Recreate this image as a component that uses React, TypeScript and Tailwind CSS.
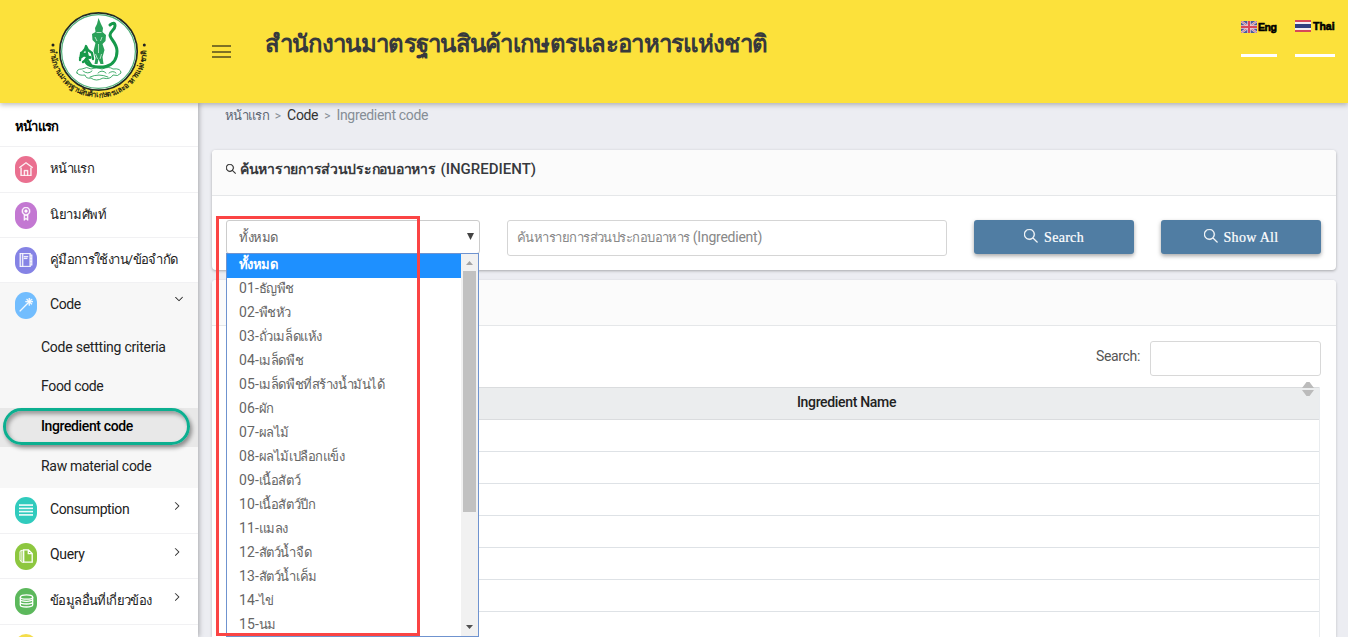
import React from "react";
import {
  TfiHome, TfiMedallAlt, TfiAgenda, TfiWand, TfiAlignJustify,
  TfiSearch, TfiAngleRight, TfiAngleDown,
} from "react-icons/tfi";

const options = [
  ["01-", "ธัญพืช"], ["02-", "พืชหัว"], ["03-", "ถั่วเมล็ดแห้ง"], ["04-", "เมล็ดพืช"],
  ["05-", "เมล็ดพืชที่สร้างน้ำมันได้"], ["06-", "ผัก"], ["07-", "ผลไม้"], ["08-", "ผลไม้เปลือกแข็ง"],
  ["09-", "เนื้อสัตว์"], ["10-", "เนื้อสัตว์ปีก"], ["11-", "แมลง"], ["12-", "สัตว์น้ำจืด"],
  ["13-", "สัตว์น้ำเค็ม"], ["14-", "ไข่"], ["15-", "นม"],
];

function Database() {
  return (
    <svg width="15" height="14" viewBox="0 0 15 14" fill="none" stroke="currentColor" strokeWidth="1.3">
      <ellipse cx="7.500" cy="3" rx="6.200" ry="2.200" />
      <path d="M1.300 3v2.200c0 1.200 2.700 2.100 6.200 2.100s6.200-.9 6.200-2.100V3M1.300 5.800v2.100c0 1.200 2.700 2.100 6.200 2.100s6.200-.9 6.200-2.100V5.800M1.300 8.600v2.300c0 1.200 2.700 2.100 6.200 2.100s6.200-.9 6.200-2.100V8.600" />
    </svg>
  );
}

function Pages() {
  return (
    <svg width="14" height="14" viewBox="0 0 14 14" fill="none" stroke="currentColor" strokeWidth="1.3">
      <path d="M4.700.8h4.800l3.700 3.700v8.700H4.700zM9.300.8v3.900h3.900" />
      <path d="M4.500 1.300H3Q1 1.300 1 3v8l1.700 2.200h2M2.900 2v10.500" strokeWidth="1" />
    </svg>
  );
}

function Logo() {
  return (
    <svg width="110" height="103" viewBox="43 0 110 103">
      <circle cx="98.5" cy="51.5" r="38.7" fill="#fff" stroke="#222c22" strokeWidth="1.7" />
      <circle cx="98.5" cy="51.5" r="36.9" fill="none" stroke="#4fae78" strokeWidth="1.2" />
      <g fill="none" stroke="#16994a" strokeLinecap="round" strokeLinejoin="round">
        <path d="M110 25q5-4 5 1c0 4-5 5-5 9s7 8 7 16-4 14-11 15.500-16 0-19-3 0-7 3-6" strokeWidth="3" />
        <path d="M80 60l1-6 4-5 1-3 2 4 4 3 1 6M81 53l5 1M80 58l4-3 4 2M83 62l4-3 4 6M86 49l2 8" strokeWidth="2.300" />
        <path d="M77 73q-1-4 5-4q5-3 9 0q6-3 11 0q7-3 11 0q8-1 8 4q-3 4-8 2q-3 5-10 3q-7 4-12 0q-5 1-6-3q-6 1-8-2zM83 71q5 4 9 0m6 2q4-4 8 0m3 0q4-3 7 0M90 77q9-4 18 0" strokeWidth=".8" />
      </g>
      <path d="M98.500 18l-1.500 6-2 4 .5 4-3.500 2 .5 6 3 3-2 8 2 7-1 6h3l1-5 2 5h3l-1-7 2-7-2-6 3-3 .5-6-3.500-3 .5-4-2-4z" fill="#2aa159" />
      <path d="M96.500 32.500h5M95 37l2 4m5-4l-1.500 4M98.500 44v9m-3 1l2 5m4-5l-1.500 5" stroke="#d5f0df" strokeWidth=".8" />
      <circle cx="53" cy="45" r="1.500" fill="#222" />
      <circle cx="144.300" cy="45" r="1.500" fill="#222" />
      <path id="seal" d="M50.500 49.500A48 48 0 0 0 146.500 49.500" fill="none" />
      <text fontSize="8" fontWeight="700" letterSpacing="0" fill="#2b2a12" className="font-['Noto_Sans',sans-serif]">
        <textPath href="#seal" textLength="149" lengthAdjust="spacingAndGlyphs">สำนักงานมาตรฐานสินค้าเกษตรและอาหารแห่งชาติ</textPath>
      </text>
    </svg>
  );
}

function Item({ icon, color, label, text, height, arrow }: {
  icon: React.ReactNode; color: string; label: string; text: string; height: string; arrow?: boolean;
}) {
  return (
    <div className={`flex shrink-0 items-start border-b border-[#f1f1f3] pl-[15px] ${height}`}>
      <span className={`mt-[9px] flex h-[27px] w-[22px] shrink-0 items-center justify-center rounded-full pb-[2px] text-sm text-white ${color}`}>{icon}</span>
      <span className={`ml-[13px] leading-6 whitespace-nowrap ${text}`}>{label}</span>
      {arrow && <TfiAngleRight className="mt-[14px] mr-[17px] ml-auto size-2" strokeWidth="1" />}
    </div>
  );
}

export default function App() {
  return (
    <div className="flex h-[637px] w-[1348px] flex-col overflow-hidden bg-[#ecedf2] font-['Roboto','Noto_Sans',sans-serif] text-sm tracking-[-0.24px] text-[#222]">
      <header className="relative z-20 flex h-[103px] shrink-0 bg-[#fce13b] shadow-[0_2px_5px_rgba(0,0,0,0.25)]">
        <div className="w-[212px] pl-[43px]"><Logo /></div>
        <div className="mt-[45px] flex h-[13px] w-[19px] flex-col justify-between">
          <i className="h-[2px] bg-[#7e7124]" /><i className="h-[2px] bg-[#7e7124]" /><i className="h-[2px] bg-[#7e7124]" />
        </div>
        <h1 className="mt-[24px] ml-[34px] text-2xl leading-10 font-bold tracking-[-0.72px] whitespace-nowrap text-[#37393d]">สำนักงานมาตรฐานสินค้าเกษตรและอาหารแห่งชาติ</h1>
        <div className="mr-[13px] ml-auto flex gap-[18px] font-['Liberation_Sans',sans-serif] text-[10.5px] font-bold text-black">
          <div className="h-[57px] w-[36px] border-b-[3px] border-white pt-[20px]">
            <div className="flex items-center gap-px leading-3">
              <svg width="16" height="12" viewBox="0 0 16 12" className="shrink-0">
                <path fill="#4a5a9c" d="M0 0h16v12H0z" />
                <path d="M0 0l16 12M16 0L0 12" stroke="#d9ccdc" strokeWidth="2.2" />
                <path d="M0 0l16 12M16 0L0 12" stroke="#d46070" strokeWidth=".8" />
                <path d="M8 0v12M0 6h16" stroke="#eccfd4" strokeWidth="3.4" />
                <path d="M8 0v12M0 6h16" stroke="#d8485a" strokeWidth="2" />
              </svg>
              <span className="pt-px tracking-[-0.5px] [-webkit-text-stroke:0.6px_black]">Eng</span>
            </div>
          </div>
          <div className="h-[57px] w-[40px] border-b-[3px] border-white pt-[20px]">
            <div className="flex items-center gap-[2px] leading-3">
              <svg width="16" height="12" viewBox="0 0 16 12" className="shrink-0">
                <path fill="#d6485a" d="M0 0h16v12H0z" /><path fill="#f2eef2" d="M0 2h16v8H0z" /><path fill="#303f80" d="M0 4h16v4H0z" />
              </svg>
              <span className="tracking-normal [-webkit-text-stroke:0.6px_black]">Thai</span>
            </div>
          </div>
        </div>
      </header>

      <div className="flex min-h-0 flex-1">
        <aside className="relative z-10 flex w-[198px] shrink-0 flex-col bg-white shadow-[1px_0_5px_rgba(0,0,0,0.3)]">
          <div className="h-[44px] shrink-0 border-b border-[#f1f1f3] pt-[12px] pl-[15px] text-[13px] leading-6 font-bold tracking-[-0.8px] text-black">หน้าแรก</div>
          <Item icon={<TfiHome strokeWidth=".5" />} color="bg-[#ea7090]" label="หน้าแรก" text="mt-[10px] text-[13px] tracking-[-0.7px]" height="h-[46px]" />
          <Item icon={<TfiMedallAlt strokeWidth=".6" className="mb-[2px]" />} color="bg-[#c378d2]" label="นิยามศัพท์" text="mt-[10px] text-[13px] tracking-[-0.35px]" height="h-[45px]" />
          <Item icon={<TfiAgenda strokeWidth=".5" />} color="bg-[#8583e5]" label="คู่มือการใช้งาน/ข้อจำกัด" text="mt-[10px] text-[13px] tracking-[-0.65px]" height="h-[45px]" />
          <div className="relative h-[205px] shrink-0 bg-[#f7f7f7]">
            <div className="flex h-[45px] items-start pl-[15px]">
              <span className="mt-[9px] flex h-[27px] w-[22px] items-center justify-center rounded-full bg-[#72bdfe] pb-[2px] text-sm text-white"><TfiWand strokeWidth=".6" /></span>
              <span className="mt-[9px] ml-[13px] leading-6 tracking-[-0.4px]">Code</span>
              <TfiAngleDown className="mt-[12px] mr-[15px] ml-auto size-2" strokeWidth="1" />
            </div>
            <div className="h-[40px] pt-[7px] pl-[41px] leading-6">Code settting criteria</div>
            <div className="h-[40px] pt-[6px] pl-[41px] leading-6 tracking-[-0.35px]">Food code</div>
            <div className="h-[39px] bg-[#e8e8e8] pt-[6px] pl-[41px] leading-6 font-medium tracking-[-0.38px] text-black">Ingredient code</div>
            <div className="pt-[7px] pl-[41px] leading-6 tracking-[-0.3px]">Raw material code</div>
            <div className="absolute top-[125px] left-[3px] h-[37px] w-[187px] rounded-full border-[3px] border-[#0caf90] shadow-[2px_3px_4px_rgba(0,0,0,0.4),inset_2px_3px_4px_rgba(0,0,0,0.35)]" />
          </div>
          <Item icon={<TfiAlignJustify strokeWidth=".8" />} color="bg-[#30cbbd]" label="Consumption" text="mt-[9px] tracking-[-0.4px]" height="h-[46px]" arrow />
          <Item icon={<Pages />} color="bg-[#8dc73f]" label="Query" text="mt-[8px] tracking-[-0.35px]" height="h-[45px]" arrow />
          <Item icon={<Database />} color="bg-[#5cb85c]" label="ข้อมูลอื่นที่เกี่ยวข้อง" text="mt-[10px] text-[13px] tracking-[-0.6px]" height="h-[46px]" arrow />
          <Item icon={null} color="bg-[#f4dd4b]" label="" text="" height="h-[46px]" />
        </aside>

        <main className="flex min-w-0 flex-1 flex-col pr-3 pl-[14px]">
          <nav className="flex h-[47px] shrink-0 gap-[6px] pl-[13px] leading-[25px] tracking-[-0.33px] whitespace-nowrap text-[#868e96]">
            <span className="text-[13px] tracking-[-0.7px] text-[#5c6673]">หน้าแรก</span><span className="text-xs leading-[26px] tracking-normal">&gt;</span><span className="text-[#333]">Code</span><span className="text-xs leading-[26px] tracking-normal">&gt;</span><span>Ingredient code</span>
          </nav>
          <section className="h-[120px] shrink-0 rounded bg-white shadow-[0_1px_3px_rgba(0,0,0,0.3)]">
            <div className="flex h-[46px] items-start rounded-t border-b border-[#e5e7e9] bg-[#fbfbfb] pl-[14px]">
              <TfiSearch className="mt-[14px] size-[10px]" strokeWidth=".8" />
              <h2 className="mt-[7px] ml-[4px] text-[15px] leading-6 font-medium tracking-normal whitespace-nowrap text-[#37393d]">
                <span className="mr-[5px] text-sm font-bold tracking-[-0.27px]">ค้นหารายการส่วนประกอบอาหาร</span>
                <span>(INGREDIENT)</span>
              </h2>
            </div>
            <div className="flex items-start pt-[24px] pl-[14px]">
              <div className="relative z-10 h-[34px] w-[254px] rounded-[3px] border border-[#ccc] bg-white text-[#666]">
                <div className="flex h-full items-center justify-between pr-[5px] pl-3">
                  <span className="pt-[2px] text-[13px] tracking-[-0.5px]">ทั้งหมด</span>
                  <svg width="7" height="7" viewBox="0 0 7 7" className="mb-[2px]"><path d="M0 0h7L3.500 7z" fill="#444" /></svg>
                </div>
                <div className="absolute top-[32px] -left-px flex h-[384px] w-[253px] border border-[#6f93cf] bg-white">
                  <ul className="flex-1 text-[13px] leading-6 whitespace-nowrap">
                    <li className="h-6 bg-[#1e90ff] pl-3 leading-[22px] font-bold tracking-[-0.6px] text-white">ทั้งหมด</li>
                    {options.map(([code, name]) => (
                      <li key={code} className="h-6 pl-3 leading-[21px]">
                        <span className="text-sm leading-[21px] tracking-[0.1px]">{code}</span>
                        <span className="tracking-[-0.47px]">{name}</span>
                      </li>
                    ))}
                  </ul>
                  <div className="flex w-[17px] flex-col items-center bg-[#f1f1f1]">
                    <svg width="17" height="17" viewBox="0 0 17 17"><path d="M5 11h7L8.500 7z" fill="#a3a3a3" /></svg>
                    <div className="h-[241px] w-[13px] bg-[#c1c1c1]" />
                    <svg width="17" height="17" viewBox="0 0 17 17" className="mt-auto"><path d="M5 6h7L8.500 10z" fill="#505050" /></svg>
                  </div>
                </div>
                <div className="absolute -top-[5px] -left-[11px] h-[420px] w-[204px] border-[3px] border-[#fb4444]" />
              </div>
              <div className="ml-[27px] h-[36px] w-[440px] rounded-[3px] border border-[#d5d5d5] pl-[9px] leading-[32px] whitespace-nowrap text-[#888]">
                <span className="mr-[3px] text-[13px] tracking-[-0.55px]">ค้นหารายการส่วนประกอบอาหาร</span>
                <span>(Ingredient)</span>
              </div>
              {["Search", "Show All"].map((s) => (
                <button key={s} className="ml-[27px] flex h-[34px] w-[160px] items-center justify-center gap-[6px] rounded-[3px] bg-[#507da3] font-['Liberation_Serif',serif] text-sm tracking-[0.3px] text-white shadow-[0_2px_4px_rgba(0,0,0,0.35)] [-webkit-text-stroke:0.2px_white]">
                  <TfiSearch className="mb-[2px] size-[14px]" strokeWidth=".5" /><span className="pt-px">{s}</span>
                </button>
              ))}
            </div>
          </section>
          <section className="mt-[10px] min-h-0 flex-1 overflow-hidden rounded-t bg-white shadow-[0_1px_3px_rgba(0,0,0,0.2)]">
            <div className="h-[46px] border-b border-[#e5e7e9] bg-[#fbfbfb]" />
            <div className="flex h-[61px] justify-end gap-[10px] pt-[15px] pr-[15px]">
              <span className="pt-[3px] leading-6 tracking-[-0.35px] text-[#555]">Search:</span>
              <input className="h-[35px] w-[171px] rounded-[3px] border border-[#d8d8d8]" />
            </div>
            <div className="mr-4 ml-[15px] border-r border-[#e9ecef]">
              <div className="relative flex h-[33px] border-y border-[#dadcde] bg-[#ebedee] font-medium">
                <div className="w-[147px]" />
                <div className="flex-1 text-center leading-[29px] tracking-[-0.33px] text-[#222]">Ingredient Name</div>
                <svg className="absolute -top-[6px] right-[5px]" width="12" height="14" viewBox="0 0 12 14"><path d="M0 6L4.500 0h3L12 6zM0 8h12L7.500 14h-3z" fill="#bbb" /></svg>
              </div>
              {[0, 1, 2, 3, 4, 5, 6].map((n) => <div key={n} className="h-8 border-b border-[#dee2e6]" />)}
            </div>
          </section>
        </main>
      </div>
    </div>
  );
}
